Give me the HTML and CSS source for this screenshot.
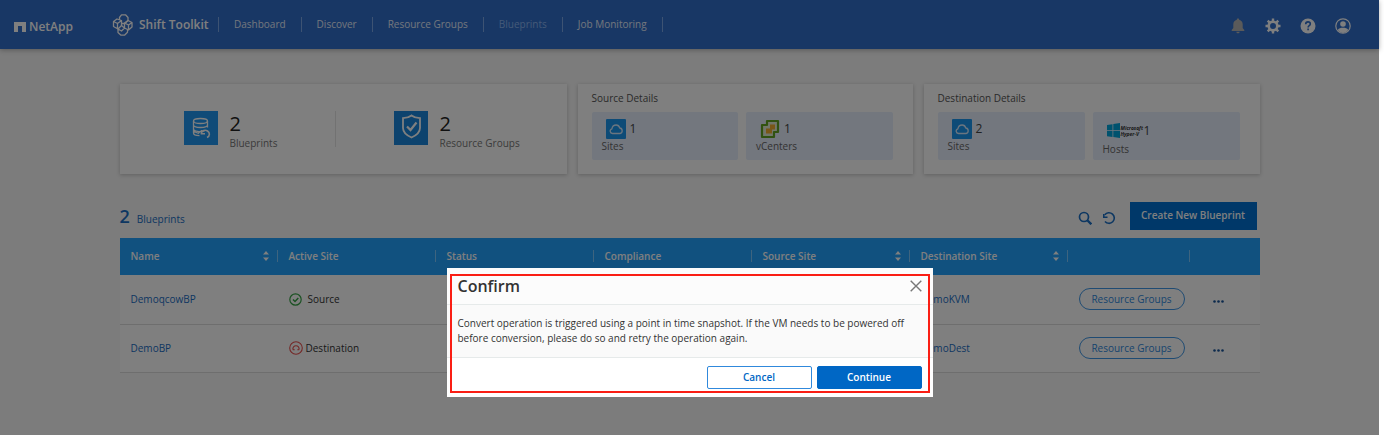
FILE: index.html
```html
<!DOCTYPE html>
<html lang="en">
<head>
<meta charset="utf-8">
<title>Shift Toolkit - Blueprints</title>
<link rel="stylesheet" href="styles.css">
</head>
<body>
<div class="app">
  <header class="topbar">
    <a class="brand" href="#">
      <svg width="12" height="10" viewBox="0 0 12 10" aria-hidden="true"><path d="M0 0h12v10H8V4H4v6H0z" fill="currentColor"/></svg>
      <span>NetApp</span>
    </a>
    <a class="product" href="#">
      <svg width="22" height="24" viewBox="0 0 22 24" fill="none" stroke="currentColor" stroke-width="1.3" stroke-linejoin="round" aria-hidden="true">
        <path d="M7.500 7V4.500L9.500 1.800h4L16 4.500v3L13 10.500H9.500"/>
        <path d="M1.500 8.500 5 6l4.500 1.500v5L6 16l-4.500-2.500zM1.500 8.500l4 2 4-3M5.500 10.500V16"/>
        <path d="M12.500 10 16 7.500l4 2V14l-3.500 3-4-2zM12.500 10l4 2 3.500-2.500M16.500 12v5"/>
        <path d="M6 16v3.500l3 2.700h3.500l3-3V17M9.500 12.500 12.500 15l-3 3-3.500-2"/>
      </svg>
      <span>Shift Toolkit</span>
    </a>
    <nav class="nav">
      <a href="#">Dashboard</a>
      <a href="#">Discover</a>
      <a href="#">Resource Groups</a>
      <a class="current" href="#">Blueprints</a>
      <a href="#">Job Monitoring</a>
    </nav>
    <div class="tools">
      <button class="muted" aria-label="Notifications"><svg width="16" height="16" viewBox="0 0 16 16" fill="currentColor"><path d="M8 .5c.8 0 1.200.5 1.200 1.200C11.500 2.300 12.700 4 12.700 6.500V10l1.600 2v1H1.700v-1l1.600-2V6.500C3.300 4 4.500 2.300 6.800 1.700 6.800 1 7.200.5 8 .5zM6.300 13.700h3.400c-.2 1-.8 1.600-1.700 1.600s-1.500-.6-1.700-1.600z"/></svg></button>
      <button aria-label="Settings"><svg width="16" height="16" viewBox="0 0 16 16"><circle cx="8" cy="8" r="4.300" fill="none" stroke="currentColor" stroke-width="2.600"/><path d="M8 .5v3M8 12.500v3M.5 8h3M12.500 8h3M2.700 2.700l2 2M11.300 11.300l2 2M2.700 13.300l2-2M11.300 4.700l2-2" stroke="currentColor" stroke-width="2.400"/></svg></button>
      <button aria-label="Help"><svg width="16" height="16" viewBox="0 0 16 16"><circle cx="8" cy="8" r="7.500" fill="currentColor"/><path d="M5.700 6.200c0-1.500 1-2.300 2.300-2.300s2.300.8 2.300 2c0 1.700-2.200 1.700-2.200 3.500M8.100 10.600v1.700" fill="none" stroke="#306eca" stroke-width="1.600"/></svg></button>
      <button aria-label="Account"><svg width="16" height="16" viewBox="0 0 16 16"><circle cx="8" cy="8" r="7.200" fill="none" stroke="currentColor" stroke-width="1.200"/><circle cx="8" cy="6" r="2.800" fill="currentColor"/><path d="M2.700 12c1.300-2 3-2.300 5.300-2.300s4 .3 5.300 2.300A7 7 0 0 1 8 15a7 7 0 0 1-5.300-3z" fill="currentColor"/></svg></button>
    </div>
  </header>

  <main class="content">
    <section class="cards">
      <div class="card totals">
        <div class="total">
          <svg width="34" height="34" viewBox="0 0 34 34" fill="none" stroke="#fff" stroke-width="1.300" aria-hidden="true"><rect width="34" height="34" fill="#2096f0" stroke="none"/><ellipse cx="16.500" cy="10" rx="7" ry="2.500"/><path d="M9.500 10v12c0 1.500 2.500 2.600 6 2.700M23.500 10v6.500M9.500 14c0 3.300 14 3.300 14 0M9.500 18c0 2.500 7 3.300 11 1.800M9.500 20.500l5 1.800 1.500-2"/><path d="M17 22.500c1-3 4-4 6.500-2.500s2.700 5-.5 6.500M17.500 19v3.700h3.500" stroke-width="1.600"/></svg>
          <div class="total-text"><strong>2</strong><span>Blueprints</span></div>
        </div>
        <div class="total">
          <svg width="34" height="34" viewBox="0 0 34 34" fill="none" stroke="#fff" stroke-width="1.800" aria-hidden="true"><rect width="34" height="34" fill="#1a86dc" stroke="none"/><path d="M17.500 4.500c2.500 2 5 2.500 8.500 2.700V17c0 4.500-4 7.500-8.500 9.500C13 24.500 9 21.500 9 17V7.200c3.500-.2 6-.7 8.500-2.700z"/><path d="M13 15.500l3.500 3.500 6-7.500" stroke-width="2.200"/></svg>
          <div class="total-text"><strong>2</strong><span>Resource Groups</span></div>
        </div>
      </div>

      <div class="card details">
        <h2>Source Details</h2>
        <div class="tiles">
          <div class="tile">
            <div class="tile-top">
              <svg class="cloud" width="20" height="20" viewBox="0 0 20 20" aria-hidden="true"><rect width="20" height="20" rx="1" fill="#1b96ee"/><path d="M6.500 14.500a2.400 2.400 0 0 1-.6-4.700C6.300 7.500 8 6 10.200 6c1.800 0 3 1 3.600 3a2.800 2.800 0 0 1 .2 5.500z" fill="none" stroke="#d6ebff" stroke-width="1.300"/></svg>
              <b>1</b>
            </div>
            <span>Sites</span>
          </div>
          <div class="tile">
            <div class="tile-top">
              <svg class="cloud" width="20" height="20" viewBox="0 0 20 20" aria-hidden="true"><path d="M7 2h11v11h-4v5H2V6h5z" fill="#e4efd4" stroke="#62a420" stroke-width="2.200" stroke-linejoin="round"/><path d="M10 5.500h5v5h-3v4H6v-5h4z" fill="#f2ae2e"/></svg>
              <b>1</b>
            </div>
            <span>vCenters</span>
          </div>
        </div>
      </div>

      <div class="card details">
        <h2>Destination Details</h2>
        <div class="tiles">
          <div class="tile">
            <div class="tile-top">
              <svg class="cloud" width="20" height="20" viewBox="0 0 20 20" aria-hidden="true"><rect width="20" height="20" rx="1" fill="#1b96ee"/><path d="M6.500 14.500a2.400 2.400 0 0 1-.6-4.700C6.300 7.500 8 6 10.200 6c1.800 0 3 1 3.600 3a2.800 2.800 0 0 1 .2 5.500z" fill="none" stroke="#d6ebff" stroke-width="1.300"/></svg>
              <b>2</b>
            </div>
            <span>Sites</span>
          </div>
          <div class="tile hosts">
            <div class="tile-top">
              <svg class="windows" width="13" height="15" viewBox="0 0 13 15" aria-hidden="true"><path d="M0 2l5.500-.8v6H0zM6.300 1.100L13 0v7.200H6.300zM0 8h5.500v6L0 13.200zM6.300 8H13v7l-6.700-1z" fill="#00a4dc"/></svg>
              <small>Microsoft<br>Hyper-V</small>
              <b>1</b>
            </div>
            <span>Hosts</span>
          </div>
        </div>
      </div>
    </section>

    <div class="toolbar">
      <h1><strong>2</strong> <span>Blueprints</span></h1>
      <button class="icon-button" aria-label="Search"><svg width="14" height="14" viewBox="0 0 14 14" fill="none" stroke="currentColor"><circle cx="6" cy="6" r="4.500" stroke-width="1.700"/><path d="M9.300 9.300l4 4" stroke-width="2.300"/></svg></button>
      <button class="icon-button" aria-label="Refresh"><svg width="14" height="14" viewBox="0 0 14 14" fill="none" stroke="currentColor" stroke-width="1.600"><path d="M2.800 3.800A5.300 5.300 0 1 1 3 10.500"/><path d="M1 6.300h4.500M1.800 3v4" /></svg></button>
      <button class="create">Create New Blueprint</button>
    </div>

    <table class="grid">
      <colgroup><col class="wide"><col class="wide"><col class="wide"><col class="wide"><col class="wide"><col class="wide"><col class="action"><col></colgroup>
      <thead>
        <tr>
          <th><div class="head">Name <svg width="6" height="10" viewBox="0 0 6 10"><path d="M0 3.500L3 0l3 3.500zM0 6.500h6L3 10z" fill="currentColor"/></svg></div></th>
          <th><div class="head">Active Site</div></th>
          <th><div class="head">Status</div></th>
          <th><div class="head">Compliance</div></th>
          <th><div class="head">Source Site <svg width="6" height="10" viewBox="0 0 6 10"><path d="M0 3.500L3 0l3 3.500zM0 6.500h6L3 10z" fill="currentColor"/></svg></div></th>
          <th><div class="head">Destination Site <svg width="6" height="10" viewBox="0 0 6 10"><path d="M0 3.500L3 0l3 3.500zM0 6.500h6L3 10z" fill="currentColor"/></svg></div></th>
          <th><div class="head"></div></th>
          <th></th>
        </tr>
      </thead>
      <tbody>
        <tr>
          <td><a href="#">DemoqcowBP</a></td>
          <td><div class="site"><svg width="13" height="13" viewBox="0 0 13 13" fill="none" stroke="#35a345" stroke-width="1.200"><circle cx="6.500" cy="6.500" r="5.700"/><path d="M4 6.500l2 2 3.300-3.600" stroke-width="1.500"/></svg>Source</div></td>
          <td></td><td></td><td></td>
          <td><a href="#">DemoKVM</a></td>
          <td class="pill-cell"><button class="pill">Resource Groups</button></td>
          <td><button class="more" aria-label="More actions"><svg width="11" height="3" viewBox="0 0 11 3" fill="currentColor"><circle cx="1.500" cy="1.500" r="1.300"/><circle cx="5.500" cy="1.500" r="1.300"/><circle cx="9.500" cy="1.500" r="1.300"/></svg></button></td>
        </tr>
        <tr>
          <td><a href="#">DemoBP</a></td>
          <td><div class="site down"><svg width="14" height="14" viewBox="0 0 14 14" fill="none" stroke="#e8504e" stroke-width="1.100"><circle cx="7" cy="7" r="6.300"/><path d="M4 8.500C3.500 6.300 5 4.800 7 4.800s3.500 1.500 3 3.700M3.800 7.200l.4 1.600h1.500M10.200 7.200l-.4 1.600H8.300"/></svg>Destination</div></td>
          <td></td><td></td><td></td>
          <td><a href="#">DemoDest</a></td>
          <td class="pill-cell"><button class="pill">Resource Groups</button></td>
          <td><button class="more" aria-label="More actions"><svg width="11" height="3" viewBox="0 0 11 3" fill="currentColor"><circle cx="1.500" cy="1.500" r="1.300"/><circle cx="5.500" cy="1.500" r="1.300"/><circle cx="9.500" cy="1.500" r="1.300"/></svg></button></td>
        </tr>
      </tbody>
    </table>
  </main>

  <div class="backdrop">
    <div class="modal" role="dialog" aria-modal="true" aria-labelledby="confirm-title">
      <div class="modal-head">
        <h2 id="confirm-title">Confirm</h2>
        <button class="close" aria-label="Close"><svg width="12" height="12" viewBox="0 0 12 12"><path d="M.7.7l10.600 10.600M11.300.7L.7 11.300" stroke="currentColor" stroke-width="1.400"/></svg></button>
      </div>
      <p class="modal-body">Convert operation is triggered using a point in time snapshot. If the VM needs to be powered off before conversion, please do so and retry the operation again.</p>
      <div class="modal-foot">
        <button class="cancel">Cancel</button>
        <button class="continue">Continue</button>
      </div>
    </div>
  </div>
</div>
</body>
</html>
```
FILE: styles.css
```css
* { box-sizing: border-box; }

body {
  display: flex;
  min-height: 100vh;
  margin: 0;
  padding: 0 5px 5px 0;
  background: #fff;
  color: #333;
  font: 10px/15px "Open Sans", "Noto Sans", sans-serif;
}

a { color: inherit; text-decoration: none; }
button { padding: 0; border: 0; background: none; color: inherit; font: inherit; }
svg { display: block; flex: none; }
h1, h2, p { margin: 0; }

.app { position: relative; flex: 1; background: #f8f8f8; }

.topbar {
  display: flex;
  align-items: center;
  height: 49px;
  padding: 0 28px 0 14px;
  background: #306eca;
  color: #fff;
  box-shadow: 0 1px 5px rgba(0, 0, 0, .3);
}
.brand { display: flex; align-items: center; gap: 3px; width: 98px; padding-top: 4px; font-size: 12px; font-weight: 600; }
.product { display: flex; align-items: center; gap: 5px; width: 106px; font-size: 12px; font-weight: 600; white-space: nowrap; }
.nav { display: flex; flex: 1; }
.nav a { padding: 0 15px; border-right: 1px solid #7ba6e6; color: #e4edfa; }
.nav a:first-child { border-left: 1px solid #7ba6e6; }
.nav .current { color: #8ab4f0; }
.tools { display: flex; gap: 19px; padding-top: 3px; }
.tools .muted { color: #b4b4b4; }

.content { max-width: 1140px; margin: 0 auto; padding-top: 35px; }

.cards { display: grid; grid-template-columns: 447fr 335fr 336fr; gap: 11px; }
.card { min-height: 90px; background: #fff; box-shadow: 0 1px 4px rgba(0, 0, 0, .22); }
.totals { display: grid; grid-template-columns: 215fr 232fr; align-items: center; }
.total { display: flex; gap: 12px; padding-left: 64px; }
.total + .total { padding-left: 58px; border-left: 1px solid #e4e4e4; }
.total-text { display: flex; flex-direction: column; height: 36px; }
.total-text strong { color: #222; font-size: 20px; line-height: 25px; font-weight: 400; }
.total-text span { color: #777; font-size: 10px; line-height: 14px; white-space: nowrap; }
.details { padding: 7px 20px 14px 14px; }
.details h2 { color: #555; font-size: 10px; font-weight: 400; }
.tiles { display: grid; grid-template-columns: 1fr 1fr; gap: 8px; margin-top: 6px; }
.tile { min-height: 48px; padding: 7px 10px 0; border-radius: 2px; background: #e6effd; color: #666; line-height: 14px; }
.tile-top { display: flex; align-items: center; gap: 4px; height: 20px; padding-left: 4px; }
.tile b { color: #444; font-size: 12px; font-weight: 400; }
.hosts .tile-top { height: 23px; gap: 1px; }
.hosts small { width: 22px; color: #333; font-size: 5px; line-height: 6px; font-weight: 700; font-style: italic; }

.toolbar { display: flex; align-items: center; gap: 10px; min-height: 28px; margin: 28px 3px 8px 0; color: #1a6ec4; }
.toolbar h1 { display: flex; flex: 1; align-items: baseline; gap: 7px; padding-top: 4px; font-size: 10px; font-weight: 400; }
.toolbar h1 strong { font-size: 18px; font-weight: 600; }
.icon-button { padding-top: 4px; color: #1a6ec4; }
.create { min-width: 127px; height: 28px; margin-left: 4px; padding-bottom: 1px; background: #0070d2; color: #fff; font-weight: 600; }

.grid { width: 100%; border-collapse: collapse; table-layout: fixed; }
.wide { width: 158px; }
.action { width: 122px; }
.grid th { height: 37px; padding: 0 0 1px; background: #22a2ff; color: #fff; font-weight: 600; text-align: left; }
.head { display: flex; justify-content: space-between; align-items: center; height: 12px; padding: 0 8px 0 11px; border-right: 1px solid #7cc8ff; }
.grid td { height: 49px; padding: 0 0 0 11px; border-bottom: 1px solid #dcdcdc; background: #fff; }
.grid tr:last-child td { height: 48px; }
.grid td a { color: #1a6ec4; }
.site { display: flex; align-items: center; gap: 6px; }
.site.down { gap: 3px; }
.pill { width: 106px; height: 22px; border: 1px solid #3f97e6; border-radius: 11px; color: #3089dc; }
.more { padding: 6px 12px 2px; color: #17539a; }

.backdrop {
  position: absolute;
  inset: 0;
  padding-top: 268px;
  background: rgba(0, 0, 0, .5);
}
.modal { position: relative; max-width: 486px; margin: 0 auto; background: #fff; }
.modal::after {
  content: "";
  position: absolute;
  inset: 6px 3px 4px;
  border: 2px solid #fa1e14;
  pointer-events: none;
}
.modal-head { display: flex; justify-content: space-between; align-items: center; height: 36px; padding: 0 11px; background: #fcfcfc; }
.modal-head h2 { color: #333; font-size: 16px; font-weight: 600; }
.close { color: #777; }
.modal-body { padding: 11px; border: solid #e6eaea; border-width: 1px 0; background: #fafafa; }
.modal-foot { display: flex; justify-content: flex-end; gap: 5px; padding: 8px 11px; }
.modal-foot button { width: 105px; height: 23px; padding-bottom: 1px; border: 1px solid #3089dc; border-radius: 2px; color: #0067c5; font-weight: 600; }
.modal-foot .continue { border-color: #0067c5; background: #0067c5; color: #fff; }
```
